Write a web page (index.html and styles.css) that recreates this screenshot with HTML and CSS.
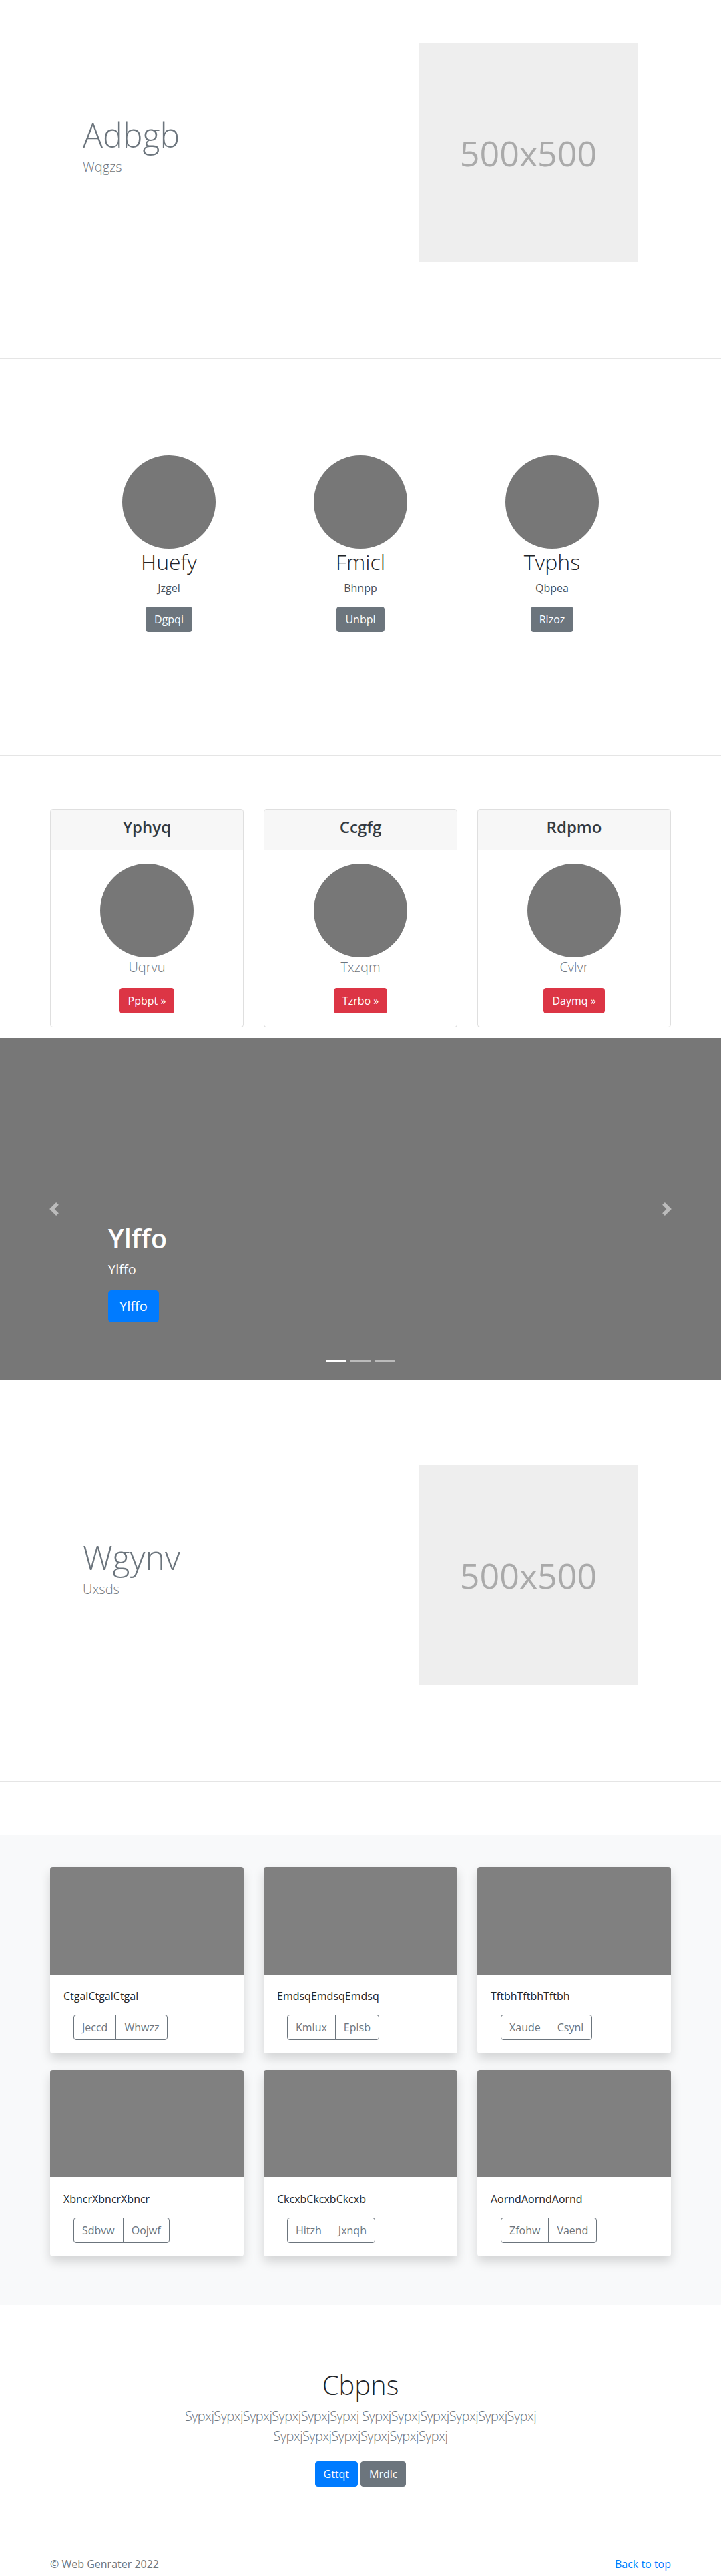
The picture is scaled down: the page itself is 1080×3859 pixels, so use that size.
FILE: index.html
```html
<!DOCTYPE html>
<html lang="en">
<head>
<meta charset="utf-8">
<title>Web Genrater</title>
<link rel="stylesheet" href="styles.css">
</head>
<body>

<section class="hero">
  <div class="container hero-row">
    <div class="hero-text">
      <h1 class="hero-title">Adbgb</h1>
      <p class="hero-sub">Wqgzs</p>
    </div>
    <div class="hero-media">
      <div class="placeholder">500x500</div>
    </div>
  </div>
</section>
<hr class="divider">

<section class="team">
  <div class="container team-grid">
    <div class="member">
      <div class="avatar"></div>
      <h2 class="member-name">Huefy</h2>
      <p class="member-role">Jzgel</p>
      <a class="btn btn-secondary" href="#">Dgpqi</a>
    </div>
    <div class="member">
      <div class="avatar"></div>
      <h2 class="member-name">Fmicl</h2>
      <p class="member-role">Bhnpp</p>
      <a class="btn btn-secondary" href="#">Unbpl</a>
    </div>
    <div class="member">
      <div class="avatar"></div>
      <h2 class="member-name">Tvphs</h2>
      <p class="member-role">Qbpea</p>
      <a class="btn btn-secondary" href="#">Rlzoz</a>
    </div>
  </div>
</section>
<hr class="divider">

<section class="features">
  <div class="container feature-grid">
    <div class="feature-card">
      <div class="feature-head"><h4>Yphyq</h4></div>
      <div class="feature-body">
        <div class="avatar"></div>
        <p class="lead feature-text">Uqrvu</p>
        <a class="btn btn-danger" href="#">Ppbpt &raquo;</a>
      </div>
    </div>
    <div class="feature-card">
      <div class="feature-head"><h4>Ccgfg</h4></div>
      <div class="feature-body">
        <div class="avatar"></div>
        <p class="lead feature-text">Txzqm</p>
        <a class="btn btn-danger" href="#">Tzrbo &raquo;</a>
      </div>
    </div>
    <div class="feature-card">
      <div class="feature-head"><h4>Rdpmo</h4></div>
      <div class="feature-body">
        <div class="avatar"></div>
        <p class="lead feature-text">Cvlvr</p>
        <a class="btn btn-danger" href="#">Daymq &raquo;</a>
      </div>
    </div>
  </div>
</section>

<section class="carousel">
  <a class="carousel-control prev" href="#">
    <svg width="20" height="20" viewBox="0 0 8 8" fill="#fff"><path d="M5.25 0l-4 4 4 4 1.5-1.5L4.25 4l2.5-2.5L5.25 0z"/></svg>
  </a>
  <a class="carousel-control next" href="#">
    <svg width="20" height="20" viewBox="0 0 8 8" fill="#fff"><path d="M2.75 0l-1.5 1.5L3.75 4l-2.5 2.5L2.75 8l4-4-4-4z"/></svg>
  </a>
  <div class="carousel-caption">
    <h1 class="caption-title">Ylffo</h1>
    <p class="caption-text">Ylffo</p>
    <p class="caption-action"><a class="btn btn-lg btn-primary" href="#">Ylffo</a></p>
  </div>
  <ol class="indicators">
    <li class="active"></li>
    <li></li>
    <li></li>
  </ol>
</section>

<section class="hero hero-second">
  <div class="container hero-row">
    <div class="hero-text">
      <h1 class="hero-title">Wgynv</h1>
      <p class="hero-sub">Uxsds</p>
    </div>
    <div class="hero-media">
      <div class="placeholder">500x500</div>
    </div>
  </div>
</section>
<hr class="divider">

<section class="album">
  <div class="container album-grid">
    <div class="product">
      <div class="product-img"></div>
      <div class="product-body">
        <p class="product-text">CtgalCtgalCtgal</p>
        <div class="btn-group"><a class="btn btn-outline" href="#">Jeccd</a><a class="btn btn-outline" href="#">Whwzz</a></div>
      </div>
    </div>
    <div class="product">
      <div class="product-img"></div>
      <div class="product-body">
        <p class="product-text">EmdsqEmdsqEmdsq</p>
        <div class="btn-group"><a class="btn btn-outline" href="#">Kmlux</a><a class="btn btn-outline" href="#">Eplsb</a></div>
      </div>
    </div>
    <div class="product">
      <div class="product-img"></div>
      <div class="product-body">
        <p class="product-text">TftbhTftbhTftbh</p>
        <div class="btn-group"><a class="btn btn-outline" href="#">Xaude</a><a class="btn btn-outline" href="#">Csynl</a></div>
      </div>
    </div>
    <div class="product">
      <div class="product-img"></div>
      <div class="product-body">
        <p class="product-text">XbncrXbncrXbncr</p>
        <div class="btn-group"><a class="btn btn-outline" href="#">Sdbvw</a><a class="btn btn-outline" href="#">Oojwf</a></div>
      </div>
    </div>
    <div class="product">
      <div class="product-img"></div>
      <div class="product-body">
        <p class="product-text">CkcxbCkcxbCkcxb</p>
        <div class="btn-group"><a class="btn btn-outline" href="#">Hitzh</a><a class="btn btn-outline" href="#">Jxnqh</a></div>
      </div>
    </div>
    <div class="product">
      <div class="product-img"></div>
      <div class="product-body">
        <p class="product-text">AorndAorndAornd</p>
        <div class="btn-group"><a class="btn btn-outline" href="#">Zfohw</a><a class="btn btn-outline" href="#">Vaend</a></div>
      </div>
    </div>
  </div>
</section>

<section class="cta">
  <div class="container">
    <h1 class="cta-title">Cbpns</h1>
    <p class="lead cta-text">SypxjSypxjSypxjSypxjSypxjSypxj SypxjSypxjSypxjSypxjSypxjSypxj SypxjSypxjSypxjSypxjSypxjSypxj</p>
    <div class="cta-actions">
      <a class="btn btn-primary" href="#">Gttqt</a>
      <a class="btn btn-secondary" href="#">Mrdlc</a>
    </div>
  </div>
</section>

<footer class="footer">
  <div class="container footer-row">
    <p class="copyright">&copy; Web Genrater 2022</p>
    <a class="back-top" href="#">Back to top</a>
  </div>
</footer>

</body>
</html>
```

FILE: styles.css
```css
* {
  box-sizing: border-box;
}

body {
  margin: 0;
  font-family: "Open Sans", "Noto Sans", sans-serif;
  font-size: 16px;
  line-height: 1.5;
  color: #212529;
  background: #fff;
}

.container {
  width: 960px;
  margin: 0 auto;
  padding: 0 15px;
}

.divider {
  margin: 0;
  border: 0;
  border-top: 1px solid rgba(0, 0, 0, 0.1);
}

/* Hero */
.hero {
  padding: 64px 0 144px;
}

.hero-second {
  padding-top: 128px;
}

.hero-row {
  display: grid;
  grid-template-columns: 1fr 1fr;
}

.hero-text {
  padding: 108px 0 0 49px;
}

.hero-title {
  margin: 0 0 3px;
  font-size: 50px;
  font-weight: 300;
  line-height: 1.2;
  color: #6c757d;
}

.hero-sub {
  margin: 0;
  font-size: 20px;
  font-weight: 300;
  color: #6c757d;
}

.hero-media {
  display: flex;
  justify-content: flex-end;
  padding-right: 49px;
}

.placeholder {
  width: 329px;
  height: 329px;
  background: #eee;
  color: #aaa;
  display: flex;
  align-items: center;
  justify-content: center;
  font-size: 52px;
}

/* Buttons */
.btn {
  display: inline-block;
  font-size: 16px;
  line-height: 1.5;
  padding: 6px 12px;
  border: 1px solid transparent;
  border-radius: 4px;
  color: #fff;
  text-decoration: none;
  vertical-align: middle;
}

.btn-secondary {
  background: #6c757d;
  border-color: #6c757d;
}

.btn-danger {
  background: #dc3545;
  border-color: #dc3545;
}

.btn-primary {
  background: #007bff;
  border-color: #007bff;
}

.btn-lg {
  font-size: 20px;
  padding: 8px 16px;
  border-radius: 5px;
}

.btn-outline {
  color: #6c757d;
  border-color: #6c757d;
  background: transparent;
}

.lead {
  font-size: 20px;
  font-weight: 300;
}

/* Team */
.team {
  padding: 144px 0 184px;
}

.team-grid {
  display: grid;
  grid-template-columns: repeat(3, 287px);
  justify-content: center;
}

.member {
  text-align: center;
}

.avatar {
  width: 140px;
  height: 140px;
  border-radius: 50%;
  background: #777;
  margin: 0 auto;
}

.member-name {
  margin: 1px 0 8px;
  font-size: 32px;
  font-weight: 300;
  line-height: 1.2;
}

.member-role {
  margin: 0 0 16px;
  color: #495057;
}

/* Feature cards */
.features {
  padding: 80px 0 16px;
}

.feature-grid {
  display: grid;
  grid-template-columns: repeat(3, 1fr);
  gap: 30px;
}

.feature-card {
  border: 1px solid rgba(0, 0, 0, 0.125);
  border-radius: 4px;
  text-align: center;
  overflow: hidden;
}

.feature-head {
  padding: 12px 20px;
  background: rgba(0, 0, 0, 0.03);
  border-bottom: 1px solid rgba(0, 0, 0, 0.125);
}

.feature-head h4 {
  margin: 0 0 8px;
  font-size: 24px;
  font-weight: 600;
  line-height: 28px;
  color: #343a40;
}

.feature-body {
  padding: 20px;
}

.feature-text {
  margin: 0 0 16px;
  color: #6c757d;
}

/* Carousel */
.carousel {
  position: relative;
  height: 512px;
  background: #777;
}

.carousel-control {
  position: absolute;
  top: 0;
  bottom: 0;
  width: 15%;
  display: flex;
  align-items: center;
  justify-content: center;
  opacity: 0.5;
}

.carousel-control.prev {
  left: 0;
}

.carousel-control.next {
  right: 0;
}

.carousel-caption {
  position: absolute;
  left: 15%;
  right: 15%;
  bottom: 66px;
  padding: 20px 0;
  color: #fff;
}

.caption-title {
  margin: 0 0 8px;
  font-size: 40px;
  font-weight: 600;
  line-height: 1.2;
}

.caption-text {
  margin: 0 0 16px;
  font-size: 20px;
}

.caption-action {
  margin: 0;
}

.indicators {
  position: absolute;
  left: 0;
  right: 0;
  bottom: 0;
  margin: 0 0 16px;
  padding: 0;
  list-style: none;
  display: flex;
  justify-content: center;
}

.indicators li {
  width: 30px;
  height: 23px;
  margin: 0 3px;
  border-top: 10px solid transparent;
  border-bottom: 10px solid transparent;
  background: rgba(255, 255, 255, 0.5);
  background-clip: padding-box;
}

.indicators li.active {
  background-color: #fff;
}

/* Album */
.album {
  margin-top: 80px;
  padding: 48px 0 73px;
  background: #f8f9fa;
}

.album-grid {
  display: grid;
  grid-template-columns: repeat(3, 1fr);
  column-gap: 30px;
  row-gap: 25px;
}

.product {
  background: #fff;
  border-radius: 4px;
  overflow: hidden;
  box-shadow: 0 8px 16px rgba(0, 0, 0, 0.15);
}

.product-img {
  height: 161px;
  background: #808080;
}

.product-body {
  padding: 20px;
}

.product-text {
  margin: 0 0 16px;
}

.btn-group {
  display: inline-flex;
  margin-left: 15px;
}

.btn-group .btn:first-child {
  border-radius: 4px 0 0 4px;
}

.btn-group .btn:last-child {
  border-radius: 0 4px 4px 0;
  margin-left: -1px;
}

/* CTA */
.cta {
  padding: 96px 0 56px;
  text-align: center;
}

.cta-title {
  margin: 0 0 8px;
  font-size: 40px;
  font-weight: 300;
  line-height: 1.2;
}

.cta-text {
  max-width: 610px;
  margin: 0 auto 22px;
  color: #6c757d;
  letter-spacing: -0.6px;
}

.cta-actions {
  display: flex;
  justify-content: center;
  gap: 4px;
}

/* Footer */
.footer {
  padding-top: 48px;
}

.footer-row {
  display: flex;
  justify-content: space-between;
}

.copyright {
  margin: 0;
  color: #6c757d;
}

.back-top {
  color: #007bff;
  text-decoration: none;
}
```
